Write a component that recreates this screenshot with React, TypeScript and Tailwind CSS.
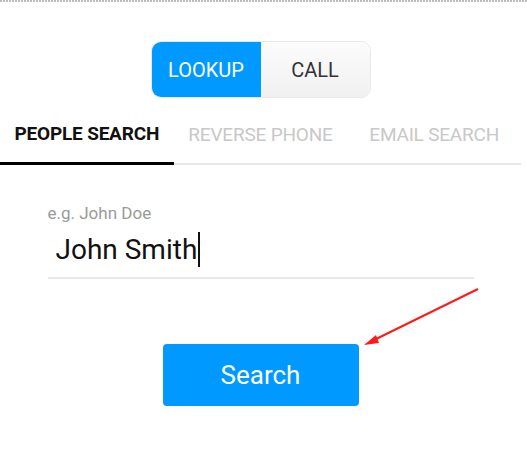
import React from 'react';

function Toggle() {
  return (
    <div className="flex h-[57px] w-[220px] overflow-hidden rounded-[10px] border border-[#e8e8e8]">
      <div className="flex w-[109px] items-center justify-center bg-[#0099ff] text-[20px] text-white">LOOKUP</div>
      <div className="flex flex-1 items-center justify-center bg-gradient-to-b from-[#fcfcfc] to-[#f0f0f0] text-[20px] text-[#333]">CALL</div>
    </div>
  );
}

function Tabs() {
  const tabs = ['PEOPLE SEARCH', 'REVERSE PHONE', 'EMAIL SEARCH'];
  return (
    <div className="flex w-[521px] border-b-2 border-[#e8e8e8]">
      {tabs.map((t, i) => (
        <div
          key={t}
          className={
            i === 0
              ? 'mb-[-2px] flex h-[52px] flex-1 items-center justify-center border-b-[3px] border-black pb-[7px] text-[19px] font-bold tracking-[-0.2px] text-[#111]'
              : 'flex h-[50px] flex-1 items-center justify-center pb-[5px] text-[19px] tracking-[-0.2px] text-[#c8c8c8]'
          }
        >
          {t}
        </div>
      ))}
    </div>
  );
}

export default function App() {
  return (
    <div className="relative h-[469px] w-[527px] bg-white font-['Roboto',sans-serif]">
      <div className="h-[2px] w-full bg-[repeating-linear-gradient(90deg,#bdbdbd_0_2px,transparent_2px_3px)]" />
      <div className="flex w-[521px] flex-col items-center">
        <div className="mt-[39px] mb-[15px]">
          <Toggle />
        </div>
        <Tabs />
        <div className="mt-[38px] w-[426px]">
          <div className="text-[17px] leading-[20px] text-[#9a9a9a]">e.g. John Doe</div>
          <div className="mt-[11px] flex items-start border-b-2 border-[#e6eaee] pb-[10px] pl-[8px] text-[28px] leading-[32px] text-[#111]">
            John Smith<span className="ml-[1px] mt-[-2px] inline-block h-[35px] w-[2px] bg-[#111]" />
          </div>
        </div>
        <button className="mt-[65px] flex h-[62px] w-[196px] items-center justify-center rounded-[4px] bg-[#0099ff] text-[26px] text-white">
          Search
        </button>
      </div>
      <svg className="absolute left-0 top-0" width="527" height="469" viewBox="0 0 527 469">
        <line x1="478" y1="289" x2="372" y2="341" stroke="#ff1a1a" strokeWidth="2" />
        <polygon points="364,345 376,335 379,343" fill="#ff1a1a" />
      </svg>
    </div>
  );
}
